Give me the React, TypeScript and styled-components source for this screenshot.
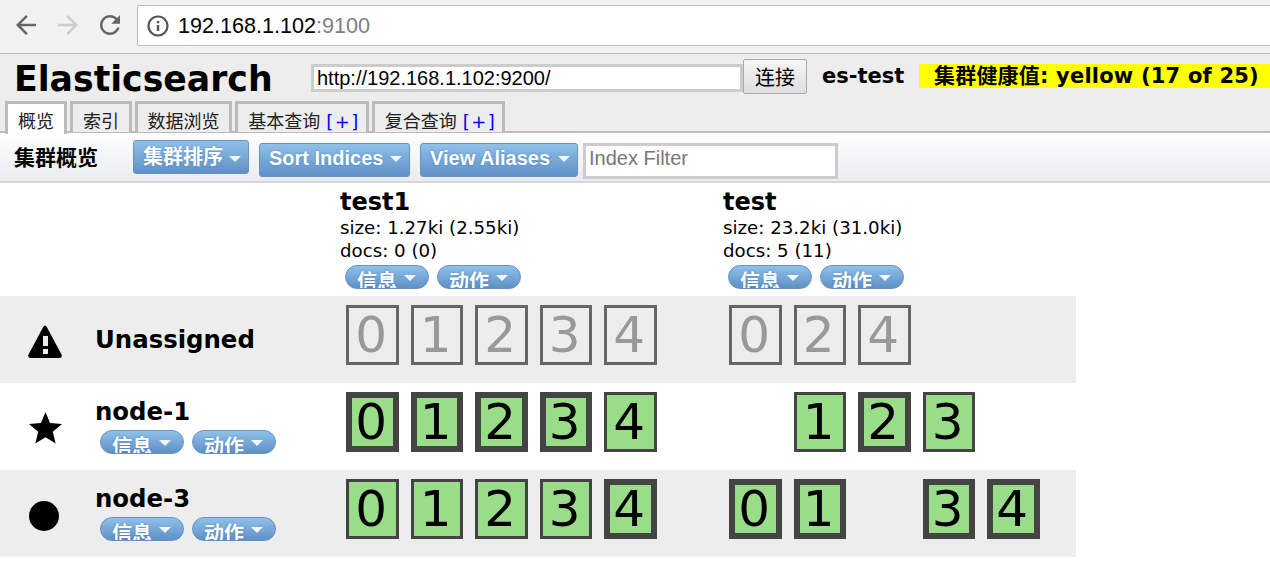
import React from "react";
import styled, { createGlobalStyle } from "styled-components";

const Global = createGlobalStyle`
  html, body { margin: 0; padding: 0; background: #fff; overflow: hidden; }
  * { box-sizing: border-box; }
  body { font-family: "DejaVu Sans", "Noto Sans CJK SC", sans-serif; color: #000; }
`;
const CJK = `"DejaVu Sans", "Noto Sans CJK SC", sans-serif`;
const ARIAL = `"Liberation Sans", "Noto Sans CJK SC", sans-serif`;

const Chrome = styled.div`
  height: 54px; background: #f2f2f2; border-bottom: 1px solid #b9b9b9;
  display: flex; align-items: flex-start; padding: 5px 0 0 11px;
`;
const NavIcon = styled.div<{ $dim?: boolean }>`
  width: 30px; height: 40px; margin-right: 12px; display: flex; align-items: center; justify-content: center;
  color: ${(p) => (p.$dim ? "#cdcdcd" : "#666")};
`;
const Omnibox = styled.div`
  flex: 1; height: 41px; background: #fff; border: 1px solid #bdbdbd; border-right: 0; border-radius: 2px 0 0 2px;
  display: flex; align-items: center; padding-left: 8px; gap: 8px; color: #555;
`;
const Url = styled.span`font: 21.6px ${ARIAL}; color: #000;`;
const Port = styled.span`color: #808080;`;

const Header = styled.div`
  height: 79px; background: #ededed; border-bottom: 2px solid #bbb; position: relative; display: flex; flex-direction: column;
`;
const TopRow = styled.div`
  height: 47px; display: flex; align-items: flex-start; padding-left: 14px;
`;
const Title = styled.h1`
  margin: 3px 0 0; width: 297px; font: bold 34.7px/44px ${CJK}; white-space: nowrap;
`;
const ClusterInput = styled.input`
  width: 432px; height: 28px; margin-top: 10px; border: 3px solid #ccc; background: #fff; padding: 0 3px;
  font: 20px ${ARIAL}; color: #000; outline: 0;
`;
const Connect = styled.button`
  width: 64px; height: 35px; margin-top: 5px; border: 1px solid #aaa; border-radius: 2px;
  background: linear-gradient(#f6f6f6, #dedede); font: 20px ${ARIAL}; color: #000; padding: 0;
`;
const ClusterName = styled.span`
  margin: 10px 0 0 15px; width: 97px; font: bold 21px/24px ${CJK}; white-space: nowrap;
`;
const Health = styled.div`
  flex: 1; margin-top: 10px; height: 24px; background: #ff0; padding-left: 15px;
  font: bold 21px/24px ${CJK}; letter-spacing: .2px; white-space: nowrap; overflow: hidden;
`;
const Tabs = styled.div`
  display: flex; gap: 3px; padding-left: 5px; height: 31px;
`;
const Tab = styled.div<{ $active?: boolean; $width: number }>`
  width: ${(p) => p.$width}px;
  height: ${(p) => (p.$active ? "33px" : "31px")}; border: 3px solid #bbb; border-bottom: 0;
  background: ${(p) => (p.$active ? "#fff" : "#ededed")}; font: 18px/36px ${ARIAL}; color: #222; white-space: nowrap;
  position: relative; z-index: 1; display: flex; justify-content: center;
`;
const Plus = styled.span`color: #00f; margin: 0 -4px 0 6px; font: 18px/36px ${CJK}; letter-spacing: 1.5px;`;

const Toolbar = styled.div`
  height: 50px; padding: 7px 0 0 14px; display: flex; align-items: flex-start;
  background: linear-gradient(#fff, #e9ebee); border-bottom: 2px solid #d3d6da;
`;
const ToolTitle = styled.div`
  width: 119px; margin-top: 3px; font: bold 21px/30px ${ARIAL};
`;
const DropButton = styled.div<{ $offset: number; $width: number }>`
  width: ${(p) => p.$width}px; height: 34px; margin: ${(p) => p.$offset}px 10px 0 0; flex: none;
  border: 1px solid #6a90c4; border-radius: 3px; background: linear-gradient(#8fc1ea, #5e90c6);
  color: #fff; font: bold 20px/30px ${ARIAL}; padding: 0 7px ${(p) => (p.$offset ? "5px" : "0")} 9px;
  display: flex; align-items: center; justify-content: space-between;
  text-shadow: 0 0 2px rgba(60, 100, 160, .6); white-space: nowrap;
  i { margin-top: 3px; }
`;
const Caret = styled.i`
  display: block; flex: none; width: 0; height: 0; border: 5px solid transparent; border-bottom: 0;
  border-left-width: 6px; border-right-width: 6px; border-top: 6px solid rgba(255, 255, 255, .9);
`;
const FilterInput = styled.input`
  width: 255px; height: 36px; margin: 3px 0 0 -5px; border: 3px solid #ccc; background: #fff; padding: 0 3px 5px;
  font: 20px ${ARIAL}; outline: 0; &::placeholder { color: #777; }
`;

const Table = styled.div`width: 1076px;`;
const Row = styled.div<{ $shade?: boolean; $head?: boolean }>`
  height: ${(p) => (p.$head ? "113px" : "87px")}; display: flex; background: ${(p) => (p.$shade ? "#ededed" : "#fff")};
`;
const NodeCell = styled.div`
  width: 340px; flex: none; display: flex; align-items: flex-start; padding-left: 28px;
`;
const NodeIcon = styled.svg`
  width: 34px; height: 34px; flex: none; margin: 29px 33px 0 0; display: block;
`;
const NodeInfo = styled.div<{ $single?: boolean }>`
  display: flex; flex-direction: column; margin-top: ${(p) => (p.$single ? "29px" : "14px")};
`;
const NodeName = styled.div`
  font: bold 24.4px/30px ${CJK}; white-space: nowrap;
`;
const Pills = styled.div`
  display: flex; gap: 8.5px; margin: 3px 0 0 5px;
`;
const Pill = styled.div`
  width: 83.5px; height: 24px; border: 1px solid #6a90c4; border-radius: 12px; overflow: hidden; flex: none;
  background: linear-gradient(#8fc1ea, #5e90c6); color: #fff; font: bold 20px/33px ${ARIAL};
  display: flex; align-items: flex-start; justify-content: space-between; padding: 0 12px 0 11px;
  text-shadow: 0 0 2px rgba(60, 100, 160, .6); white-space: nowrap;
  ${Caret} { margin-top: 9px; }
`;
const IndexHead = styled.div`
  width: 383px; flex: none; padding-top: 4px;
`;
const IndexName = styled.div`font: bold 24px/30px ${CJK};`;
const IndexStat = styled.div`font: 18.2px/22.5px ${CJK}; white-space: nowrap;`;
const ShardCell = styled.div`
  width: 383px; flex: none; display: flex; gap: 12px; padding: 9px 0 0 6px; align-items: flex-start;
`;
const Shard = styled.div<{ $kind: "none" | "un" | "rep" | "pri" }>`
  width: 52.5px; height: 60px; flex: none; display: flex; justify-content: center; padding-right: 2px;
  font: 50px/${(p) => (p.$kind === "pri" ? "48px" : "54px")} ${CJK};
  visibility: ${(p) => (p.$kind === "none" ? "hidden" : "visible")};
  border: ${(p) => (p.$kind === "pri" ? "6px" : "3px")} solid ${(p) => (p.$kind === "un" ? "#666" : "#444")};
  background: ${(p) => (p.$kind === "un" ? "transparent" : "#99dd88")};
  color: ${(p) => (p.$kind === "un" ? "#999" : "#000")};
`;

type K = "none" | "un" | "rep" | "pri";
const Shards = ({ kinds }: { kinds: K[] }) => (
  <ShardCell>
    {kinds.map((k, i) => (
      <Shard key={i} $kind={k}>{k === "none" ? "" : i}</Shard>
    ))}
  </ShardCell>
);
const ActionPills = () => (
  <Pills>
    <Pill>信息<Caret /></Pill>
    <Pill>动作<Caret /></Pill>
  </Pills>
);

export default function App() {
  return (
    <>
      <Global />
      <Chrome>
        <NavIcon>
          <svg width="30" height="30" viewBox="0 0 24 24" fill="currentColor">
            <path d="M20 11H7.830l5.590-5.590L12 4l-8 8 8 8 1.410-1.410L7.830 13H20v-2z" />
          </svg>
        </NavIcon>
        <NavIcon $dim>
          <svg width="30" height="30" viewBox="0 0 24 24" fill="currentColor">
            <path d="M4 11h12.170l-5.590-5.590L12 4l8 8-8 8-1.410-1.410L16.170 13H4v-2z" />
          </svg>
        </NavIcon>
        <NavIcon>
          <svg width="30" height="30" viewBox="0 0 24 24" fill="currentColor">
            <path d="M17.650 6.350C16.200 4.900 14.210 4 12 4c-4.420 0-7.990 3.580-7.990 8s3.570 8 7.990 8c3.730 0 6.840-2.550 7.730-6h-2.080c-.82 2.330-3.040 4-5.650 4-3.310 0-6-2.690-6-6s2.690-6 6-6c1.660 0 3.140.69 4.220 1.780L13 11h7V4l-2.350 2.350z" />
          </svg>
        </NavIcon>
        <Omnibox>
          <svg width="24" height="24" viewBox="0 0 24 24" fill="none" stroke="currentColor" strokeWidth="2.200">
            <circle cx="12" cy="12" r="9.500" />
            <path d="M12 11v6M12 7v2.200" strokeWidth="2.400" />
          </svg>
          <Url>192.168.1.102<Port>:9100</Port></Url>
        </Omnibox>
      </Chrome>
      <Header>
        <TopRow>
          <Title>Elasticsearch</Title>
          <ClusterInput defaultValue="http://192.168.1.102:9200/" />
          <Connect>连接</Connect>
          <ClusterName>es-test</ClusterName>
          <Health>集群健康值: yellow (17 of 25)</Health>
        </TopRow>
        <Tabs>
          <Tab $active $width={62}>概览</Tab>
          <Tab $width={62}>索引</Tab>
          <Tab $width={97}>数据浏览</Tab>
          <Tab $width={134}>基本查询<Plus>[+]</Plus></Tab>
          <Tab $width={133}>复合查询<Plus>[+]</Plus></Tab>
        </Tabs>
      </Header>
      <Toolbar>
        <ToolTitle>集群概览</ToolTitle>
        <DropButton $offset={0} $width={116}>集群排序<Caret /></DropButton>
        <DropButton $offset={3} $width={151}>Sort Indices<Caret /></DropButton>
        <DropButton $offset={3} $width={158}>View Aliases<Caret /></DropButton>
        <FilterInput placeholder="Index Filter" />
      </Toolbar>
      <Table>
        <Row $head>
          <NodeCell />
          <IndexHead>
            <IndexName>test1</IndexName>
            <IndexStat>size: 1.27ki (2.55ki)</IndexStat>
            <IndexStat>docs: 0 (0)</IndexStat>
            <ActionPills />
          </IndexHead>
          <IndexHead>
            <IndexName>test</IndexName>
            <IndexStat>size: 23.2ki (31.0ki)</IndexStat>
            <IndexStat>docs: 5 (11)</IndexStat>
            <ActionPills />
          </IndexHead>
        </Row>
        <Row $shade>
          <NodeCell>
            <NodeIcon viewBox="0 0 34 34">
              <path d="M17 0.500 Q18 0.500 18.800 2 L33.500 29.500 Q34.500 32.800 31.500 33 L2.500 33 Q-.5 32.800 .5 29.500 L15.200 2 Q16 .5 17 .5 Z" fill="#000" />
              <rect x="15" y="11" width="5" height="10" fill="#ededed" />
              <rect x="15" y="24" width="5" height="5" fill="#ededed" />
            </NodeIcon>
            <NodeInfo $single><NodeName>Unassigned</NodeName></NodeInfo>
          </NodeCell>
          <Shards kinds={["un", "un", "un", "un", "un"]} />
          <ShardCell>
            <Shard $kind="un">0</Shard>
            <Shard $kind="un">2</Shard>
            <Shard $kind="un">4</Shard>
          </ShardCell>
        </Row>
        <Row>
          <NodeCell>
            <NodeIcon viewBox="0 0 34 34">
              <path d="M17.500 0 L22 11 L34 12 L24.800 19.800 L27.700 31.500 L17.500 25.300 L7.300 31.500 L10.200 19.800 L1 12 L13 11 Z" fill="#000" />
            </NodeIcon>
            <NodeInfo>
              <NodeName>node-1</NodeName>
              <ActionPills />
            </NodeInfo>
          </NodeCell>
          <Shards kinds={["pri", "pri", "pri", "pri", "rep"]} />
          <Shards kinds={["none", "rep", "pri", "rep", "none"]} />
        </Row>
        <Row $shade>
          <NodeCell>
            <NodeIcon viewBox="0 0 34 34">
              <circle cx="16" cy="17" r="15" fill="#000" />
            </NodeIcon>
            <NodeInfo>
              <NodeName>node-3</NodeName>
              <ActionPills />
            </NodeInfo>
          </NodeCell>
          <Shards kinds={["rep", "rep", "rep", "rep", "pri"]} />
          <Shards kinds={["pri", "pri", "none", "pri", "pri"]} />
        </Row>
      </Table>
    </>
  );
}
